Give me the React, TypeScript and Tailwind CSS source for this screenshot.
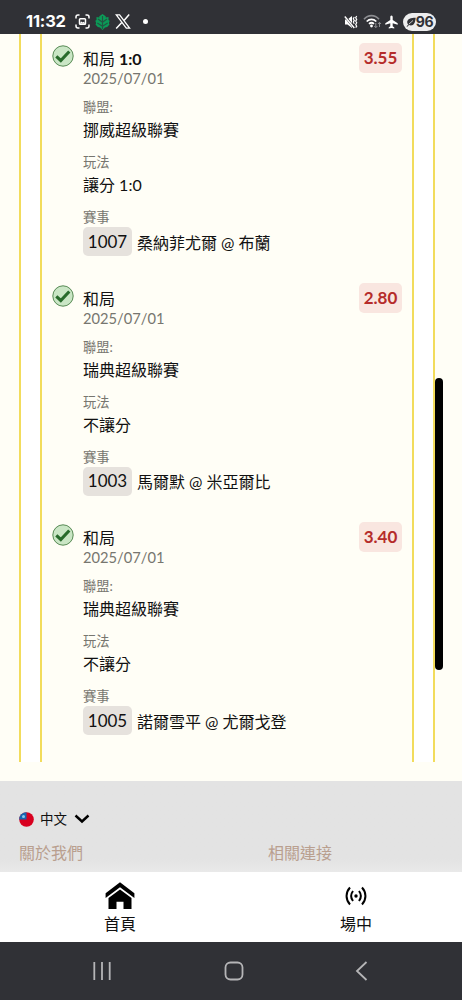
import type { ReactNode } from "react";

type Bet = {
  pick: string;
  line?: string;
  date: string;
  odds: string;
  league: string;
  market: string;
  code: string;
  match: string;
};

const bets: Bet[] = [
  {
    pick: "和局",
    line: "1:0",
    date: "2025/07/01",
    odds: "3.55",
    league: "挪威超級聯賽",
    market: "讓分 1:0",
    code: "1007",
    match: "桑納菲尤爾 @ 布蘭",
  },
  {
    pick: "和局",
    date: "2025/07/01",
    odds: "2.80",
    league: "瑞典超級聯賽",
    market: "不讓分",
    code: "1003",
    match: "馬爾默 @ 米亞爾比",
  },
  {
    pick: "和局",
    date: "2025/07/01",
    odds: "3.40",
    league: "瑞典超級聯賽",
    market: "不讓分",
    code: "1005",
    match: "諾爾雪平 @ 尤爾戈登",
  },
];

function StatusBar() {
  return (
    <header className="flex h-[34px] shrink-0 items-center bg-[#303136] pt-[9px] pr-[26px] pl-[26px] text-white">
      <span className="w-[49px] font-['Inter'] text-[16.5px] leading-none font-bold tracking-[-0.2px]">
        11:32
      </span>
      <svg width="15" height="15" viewBox="0 0 15 15" fill="none" stroke="currentColor" strokeWidth="1.5">
        <path d="M1 4.5V3a2 2 0 0 1 2-2h1.5M10.500 1H12a2 2 0 0 1 2 2v1.500M14 10.500V12a2 2 0 0 1-2 2h-1.500M4.500 14H3a2 2 0 0 1-2-2v-1.500" />
        <rect x="4.500" y="4.800" width="6" height="5.400" rx=".8" />
        <path d="M4.500 9.500l2-2 1.200 1 1-.8 2 2z" fill="currentColor" stroke="none" />
      </svg>
      <svg className="ml-[5px]" width="15" height="16" viewBox="0 0 15 16">
        <path
          d="M7.500 0l3.200 2.300v1.200l2.800-.4v3l1.200.6-.8 2.300.6 1.500-2.300 2.500-2.200.4L7.500 16 5 13.400l-2.200-.4L.5 10.500 1.100 9 .3 6.700l1.200-.6v-3l2.800.4V2.300z"
          fill="#0b9a57"
        />
        <path d="M7.500 2v13M3 5l4.500 3.300L12 5M2.300 9l5.200 3.300L12.700 9" fill="none" stroke="#235443" strokeWidth="1.100" />
      </svg>
      <svg className="ml-[5px]" width="16" height="15" viewBox="0 0 16 15" fill="none" stroke="currentColor">
        <path d="M1.300.8h3.300l10 13.400h-3.300z" strokeWidth="1.300" />
        <path d="M14.200.5L9 6.400M6.800 8.600L1.200 14.500" strokeWidth="1.500" />
      </svg>
      <span className="ml-3 size-[5px] rounded-full bg-white" />

      <div className="ml-auto flex items-center">
        <svg width="14" height="14" viewBox="0 0 14 14" fill="none" stroke="currentColor">
          <path d="M1 4.500h2.500L8 1v12L3.500 9.500H1z" fill="currentColor" stroke="none" />
          <path d="M.5.8l10 12.400" stroke="#303136" strokeWidth="2.400" />
          <path d="M.8 1.500l9.500 11.500" strokeWidth="1.400" />
          <path d="M10.300 2l-1 1.700 1 1.700-1 1.700 1 1.700M12.700 1l-1 1.700 1 1.700-1 1.700 1 1.700-1 1.700 1 1.700-1 1.500" strokeWidth="1.200" />
        </svg>
        <svg className="ml-[5px]" width="19" height="15" viewBox="0 0 19 15" fill="none" stroke="currentColor">
          <path d="M1 5.200C5.300.4 11.700.4 16 5.200" stroke="#8c8d91" strokeWidth="1.600" />
          <path d="M3.700 7.500c2.800-2.900 6.800-2.900 9.600 0M6 9.900c1.500-1.400 3.500-1.400 5 0" strokeWidth="1.700" />
          <circle cx="8.500" cy="12" r="1.400" fill="currentColor" stroke="none" />
          <path d="M12.800 9v4.500M11.300 12l1.500 1.700 1.500-1.700M16.500 13V8.500M15 10l1.500-1.700L18 10" stroke="#8c8d91" strokeWidth="1" />
        </svg>
        <svg className="ml-[3px]" width="13" height="14" viewBox="0 0 13 14" fill="currentColor">
          <path d="M6.500.5c.8 0 1.200.8 1.200 1.700v2.900l5 3.100v1.500l-5-1.400v3l1.600 1.200v1.100l-2.800-.7-2.800.7v-1.100l1.600-1.200v-3l-5 1.400V8.200l5-3.100V2.200C5.300 1.300 5.700.5 6.500.5z" />
        </svg>
        <span className="ml-[5px] flex h-[18px] w-[33px] items-center justify-center rounded-full bg-[#ededee] text-[#303136]">
          <svg width="10" height="10" viewBox="0 0 10 10">
            <path d="M9.700.7C5 .8 1.200 1.800 1.200 5.200c0 1 .4 1.800 1 2.300l-1.700 2 .8.200 1.700-1.600C7.500 9.600 9.300 6 9.700.7z" fill="currentColor" />
            <path d="M2.800 7.200L7 3.500" stroke="#ededee" strokeWidth=".8" />
          </svg>
          <span className="font-['Inter'] text-[14px] leading-none font-bold tracking-[-0.4px]">96</span>
        </span>
      </div>
    </header>
  );
}

function WonIcon() {
  return (
    <svg width="22" height="22" viewBox="0 0 22 22" fill="none">
      <circle cx="11" cy="11" r="10.200" fill="#cae6c5" stroke="#578a54" strokeWidth="1" />
      <path d="M4.300 11.300l4.500 4.200L17.300 6.500" stroke="#286b2b" strokeWidth="3.100" />
    </svg>
  );
}

function Field({ label, children }: { label: string; children: ReactNode }) {
  return (
    <div className="mt-2.5">
      <div className="h-[19px] text-[13.3px] leading-[19px] text-[#77766f]">{label}</div>
      <div className="h-[26px] text-base leading-[26px]">{children}</div>
    </div>
  );
}

function BetItem({ bet }: { bet: Bet }) {
  return (
    <article className="flex h-[239.600px] pl-2.5">
      <div className="w-[31px] shrink-0 pt-[11px]">
        <WonIcon />
      </div>
      <div className="min-w-0 flex-1 pt-[14px]">
        <h3 className="h-[21px] text-base leading-[21px]">
          {bet.pick}
          {bet.line && <span className="font-bold"> {bet.line}</span>}
        </h3>
        <div className="h-[19px] text-[14.700px] leading-[19px] text-[#77766f]">{bet.date}</div>
        <Field label="聯盟:">{bet.league}</Field>
        <Field label="玩法">{bet.market}</Field>
        <div className="mt-2.5">
          <div className="h-[19px] text-[13.3px] leading-[19px] text-[#77766f]">賽事</div>
          <div className="flex h-[29px] items-center gap-[5px] whitespace-nowrap">
            <span className="flex h-[29px] w-[49px] items-center justify-center rounded-[5px] bg-[#e6e2dd] text-[17px]">
              {bet.code}
            </span>
            <span className="pt-0.5 text-base">{bet.match}</span>
          </div>
        </div>
      </div>
      <span className="mt-[9px] mr-2.5 flex h-[30px] w-[43px] shrink-0 items-center justify-center rounded-[5px] bg-[#f9e6e0] text-[17px] font-bold text-[#b52c2a]">
        {bet.odds}
      </span>
    </article>
  );
}

function Footer() {
  return (
    <footer className="h-[91px] shrink-0 bg-linear-to-b from-[#e3e3e3] from-85% to-[#e9e9e9] px-[19px] pt-7">
      <button className="flex h-5 items-center">
        <svg width="15" height="15" viewBox="0 0 15 15">
          <circle cx="7.500" cy="7.500" r="7.300" fill="#d8001f" />
          <path d="M7.500.2a7.300 7.300 0 0 0-7.300 7.300h7.300z" fill="#1766b0" />
          <circle cx="4.500" cy="4.500" r="1.500" fill="#8cc8ec" />
        </svg>
        <span className="ml-1.5 text-[13.500px] leading-5">中文</span>
        <svg className="ml-[7px]" width="16" height="10" viewBox="0 0 16 10" fill="none" stroke="black" strokeWidth="2.400">
          <path d="M1.500 1.500L8 7.500l6.500-6" />
        </svg>
      </button>
      <div className="mt-3 flex text-base leading-6 text-[#b99f8f]">
        <span className="w-[249px]">關於我們</span>
        <span>相關連接</span>
      </div>
    </footer>
  );
}

function TabBar() {
  return (
    <nav className="flex h-[70px] shrink-0 bg-white pr-[-3px] pl-1 text-base">
      <a className="flex w-[232px] flex-col items-center pt-2.5">
        <svg width="30" height="28" viewBox="0 0 30 28">
          <path d="M15 .3L29.400 11.300V16L15 5.300.6 16V11.300z" />
          <path d="M15 7.500l11.500 8.400V27h-8v-7.300h-7V27h-8V15.900z" />
        </svg>
        <span className="mt-0.5 leading-6">首頁</span>
      </a>
      <a className="flex flex-1 flex-col items-center pt-2.5 pl-3.5">
        <svg width="22" height="28" viewBox="0 0 22 28" fill="none" stroke="black" strokeWidth="2">
          <path d="M5 5.500c-4.600 5-4.600 12 0 17M17 5.500c4.600 5 4.600 12 0 17M8 9c-2.400 3.200-2.400 6.800 0 10M14 9c2.400 3.200 2.400 6.800 0 10" />
          <circle cx="11" cy="14" r="1.700" fill="black" stroke="none" />
        </svg>
        <span className="mt-0.5 leading-6">場中</span>
      </a>
    </nav>
  );
}

function SystemNav() {
  return (
    <div className="flex h-[58px] shrink-0 items-center bg-[#303136] pr-[94px] pl-[92px] text-[#b5b5b7]">
      <svg width="20" height="20" viewBox="0 0 20 20" fill="none" stroke="currentColor" strokeWidth="1.800">
        <path d="M2.300 1v18M10 1v18M17.700 1v18" />
      </svg>
      <svg className="mx-auto" width="20" height="20" viewBox="0 0 20 20" fill="none" stroke="currentColor" strokeWidth="1.800">
        <rect x="1.500" y="1.500" width="17" height="17" rx="5" />
      </svg>
      <svg width="13" height="20" viewBox="0 0 13 20" fill="none" stroke="currentColor" strokeWidth="1.800">
        <path d="M11.500 1L2 10l9.500 9" />
      </svg>
    </div>
  );
}

export default function App() {
  return (
    <div className="relative flex h-[1000px] w-[462px] flex-col overflow-hidden bg-[#fffef6] font-['Lato','Noto_Sans_CJK_TC',sans-serif] text-[#111]">
      <StatusBar />
      <main className="h-[747px] shrink-0">
        <div className="mr-[27px] ml-[19px] h-[728px] border-x-[2.500px] border-[#f2dc5c] bg-white px-[19px]">
          <div className="h-full border-x-[2.500px] border-[#f2dc5c] bg-[#fffef6]">
            {bets.map((bet) => (
              <BetItem key={bet.code} bet={bet} />
            ))}
          </div>
        </div>
      </main>
      <Footer />
      <TabBar />
      <SystemNav />
      {/* scroll thumb */}
      <div className="absolute top-[378px] right-[19px] h-[292px] w-2 rounded-full bg-black" />
    </div>
  );
}
